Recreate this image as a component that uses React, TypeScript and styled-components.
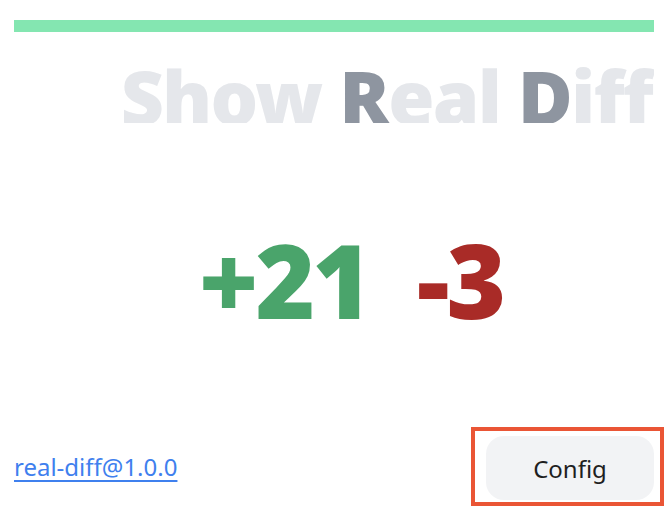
import styled, { createGlobalStyle } from "styled-components";

const GlobalStyle = createGlobalStyle`
  html, body {
    margin: 0;
    padding: 0;
    background: #ffffff;
  }
  body {
    font-family: "Noto Sans", "Open Sans", sans-serif;
  }
`;

const Page = styled.div`
  width: 672px;
  height: 516px;
  box-sizing: border-box;
  padding: 20px 18px 10px 14px;
  display: flex;
  flex-direction: column;
`;

const Bar = styled.div`
  height: 12px;
  background-color: #84e6b1;
`;

const Title = styled.h1`
  margin: 27px 0 0 0;
  height: 64px;
  overflow: hidden;
  text-align: right;
  padding-right: 2px;
  font-size: 75px;
  line-height: 1;
  font-weight: 900;
  letter-spacing: -1.8px;
  color: #e5e7eb;
  white-space: nowrap;
`;

const Mark = styled.span`
  color: #8e95a0;
`;

const Counts = styled.div`
  flex: 1;
  display: flex;
  justify-content: center;
  align-items: center;
  gap: 48px;
  padding: 10px 0 0 34px;
  font-size: 102px;
  font-weight: 900;
  line-height: 1;
  letter-spacing: -3px;
`;

const Count = styled.span<{ $tone: "add" | "del" }>`
  color: ${(p) => (p.$tone === "add" ? "#4aa46b" : "#a92b27")};
`;

const Footer = styled.div`
  display: flex;
  justify-content: space-between;
  align-items: center;
`;

const Version = styled.a`
  font-size: 24px;
  color: #3f80ee;
  text-decoration: underline;
  text-underline-offset: 4px;
  text-decoration-thickness: 2px;
  cursor: pointer;
`;

const Highlight = styled.div`
  border: 4px solid #ea5535;
  padding: 5px 6px 2px 11px;
  margin-right: -10px;
`;

const ConfigBtn = styled.button`
  width: 168px;
  height: 64px;
  border: 0;
  border-radius: 18px;
  background-color: #f2f3f5;
  font-family: inherit;
  font-size: 24px;
  color: #1f1f1f;
  cursor: pointer;
  display: block;
`;

export default function App() {
  return (
    <>
      <GlobalStyle />
      <Page>
        <Bar />
        <Title>
          Show <Mark>R</Mark>eal <Mark>D</Mark>iff
        </Title>
        <Counts>
          <Count $tone="add">+21</Count>
          <Count $tone="del">-3</Count>
        </Counts>
        <Footer>
          <Version>real-diff@1.0.0</Version>
          <Highlight>
            <ConfigBtn>Config</ConfigBtn>
          </Highlight>
        </Footer>
      </Page>
    </>
  );
}
